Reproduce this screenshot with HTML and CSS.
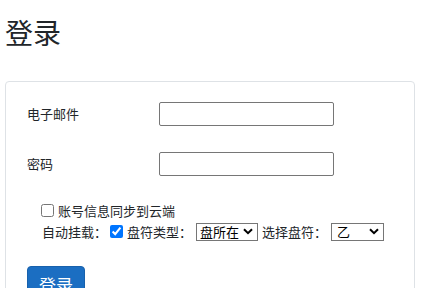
FILE: index.html
```html
<!DOCTYPE html>
<html lang="zh-CN">
<head>
<meta charset="utf-8">
<title>登录</title>
<link rel="stylesheet" href="styles.css">
</head>
<body>
<div class="page">
  <h1 class="title">登录</h1>
  <div class="card">
    <div class="field">
      <label class="field-label" for="email">电子邮件</label>
      <input class="field-input" id="email" type="text">
    </div>
    <div class="field">
      <label class="field-label" for="pwd">密码</label>
      <input class="field-input" id="pwd" type="password">
    </div>
    <div class="options">
      <label class="opt-line"><input class="cb" type="checkbox">账号信息同步到云端</label>
      <div class="opt-line">
        <span class="lead">自动挂载：</span><input class="cb cb-mount" type="checkbox" checked><span>盘符类型：</span>
        <select class="sel sel-type"><option>盘所在</option></select>
        <span>选择盘符：</span>
        <select class="sel sel-letter"><option>乙</option></select>
      </div>
    </div>
    <button class="btn" type="button">登录</button>
  </div>
</div>
</body>
</html>
```
FILE: styles.css
```css
html, body {
  margin: 0;
  padding: 0;
  background: #fff;
}
body {
  font-family: "Noto Sans CJK SC", "Noto Sans", sans-serif;
  color: #212529;
  font-size: 13px;
}
.page {
  padding: 0 7px 0 5px;
}
.title {
  margin: 0;
  padding-top: 15px;
  font-size: 28px;
  font-weight: 400;
  line-height: 34px;
  height: 66px;
}
.card {
  border: 1px solid #dee2e6;
  border-radius: 4px;
  padding: 20px 21px 0 21px;
  height: 240px;
}
.field {
  display: flex;
  align-items: center;
  height: 24px;
  margin-bottom: 26px;
}
.field-label {
  width: 132px;
  flex: none;
  line-height: 24px;
}
.field-input {
  box-sizing: border-box;
  width: 175px;
  height: 24px;
  border: 1px solid #767676;
  border-radius: 2px;
  padding: 1px 4px;
  margin: 0;
  font: inherit;
}
.options {
  margin-top: -2px;
  padding-left: 10px;
}
.opt-line {
  display: flex;
  align-items: center;
  height: 21px;
  white-space: nowrap;
}
.cb {
  width: 13px;
  height: 13px;
  margin: 0 4px 0 4px;
  flex: none;
}
.lead {
  margin-left: 5px;
}
.cb-mount {
  margin-left: 3px;
}
.sel {
  -webkit-appearance: none;
  appearance: none;
  box-sizing: border-box;
  height: 18px;
  font: inherit;
  font-size: 13px;
  line-height: 16px;
  color: #000;
  border: 1px solid #767676;
  border-radius: 0;
  padding: 0 0 0 3px;
  margin: 0 4px;
  background: #fff url("data:image/svg+xml;utf8,<svg xmlns='http://www.w3.org/2000/svg' width='10' height='7' viewBox='0 0 10 7'><path d='M1 1.2 L5 5.2 L9 1.2' fill='none' stroke='black' stroke-width='2'/></svg>") no-repeat right 4px center;
  flex: none;
}
.sel-type {
  width: 62px;
}
.sel-letter {
  width: 53px;
  padding-left: 5px;
}
.btn {
  margin-top: 24px;
  box-sizing: border-box;
  height: 38px;
  padding: 0 11px;
  background: #1b6ec2;
  border: 1px solid #1861ac;
  border-radius: 4px;
  color: #fff;
  font-family: inherit;
  font-size: 17px;
  line-height: 36px;
}
```
